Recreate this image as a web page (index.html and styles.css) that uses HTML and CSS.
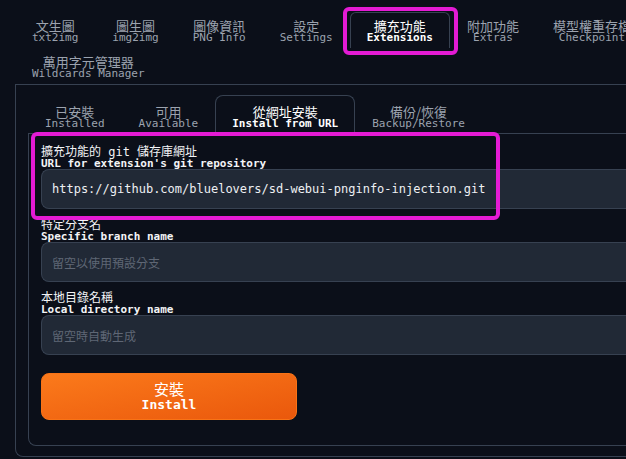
FILE: index.html
```html
<!DOCTYPE html>
<html lang="zh-Hant">
<head>
<meta charset="utf-8">
<title>Extensions</title>
<link rel="stylesheet" href="styles.css">
</head>
<body>
<div class="app">
  <nav class="tabs">
    <button class="tab"><span class="zh">文生圖</span><span class="en">txt2img</span></button>
    <button class="tab"><span class="zh">圖生圖</span><span class="en">img2img</span></button>
    <button class="tab"><span class="zh">圖像資訊</span><span class="en">PNG Info</span></button>
    <button class="tab"><span class="zh">設定</span><span class="en">Settings</span></button>
    <button class="tab selected"><span class="zh">擴充功能</span><span class="en">Extensions</span></button>
    <button class="tab"><span class="zh">附加功能</span><span class="en">Extras</span></button>
    <button class="tab"><span class="zh">模型權重存檔</span><span class="en">Checkpoint</span></button>
    <button class="tab"><span class="zh">萬用字元管理器</span><span class="en">Wildcards Manager</span></button>
  </nav>
  <section class="panel">
    <nav class="subtabs">
      <button class="subtab"><span class="zh">已安裝</span><span class="en">Installed</span></button>
      <button class="subtab"><span class="zh">可用</span><span class="en">Available</span></button>
      <button class="subtab selected"><span class="zh">從網址安裝</span><span class="en">Install from URL</span></button>
      <button class="subtab"><span class="zh">備份/恢復</span><span class="en">Backup/Restore</span></button>
    </nav>
    <div class="subpanel">
      <div class="field">
        <label class="label"><span class="zh">擴充功能的 git 儲存庫網址</span><span class="en">URL for extension's git repository</span></label>
        <div class="input">https://github.com/bluelovers/sd-webui-pnginfo-injection.git</div>
      </div>
      <div class="field">
        <label class="label"><span class="zh">特定分支名</span><span class="en">Specific branch name</span></label>
        <div class="input placeholder">留空以使用預設分支</div>
      </div>
      <div class="field">
        <label class="label"><span class="zh">本地目錄名稱</span><span class="en">Local directory name</span></label>
        <div class="input placeholder">留空時自動生成</div>
      </div>
      <button class="install"><span class="zh">安裝</span><span class="en">Install</span></button>
    </div>
  </section>
  <div class="mark mark-tab"></div>
  <div class="mark mark-field"></div>
</div>
</body>
</html>
```
FILE: styles.css
```css
html, body {
  margin: 0;
  padding: 0;
  background: #0b0f19;
  overflow: hidden;
}
body {
  font-family: "DejaVu Sans Mono", "Noto Sans CJK TC", monospace;
  color: #e5e7eb;
}
.app {
  position: relative;
  width: 760px;
  padding: 12px 0 0 15px;
}
.zh, .en {
  display: block;
  white-space: nowrap;
}
.tabs {
  display: flex;
  flex-wrap: wrap;
}
.tab, .subtab {
  font-family: inherit;
  background: transparent;
  border: 1px solid transparent;
  border-bottom: none;
  color: #9ca3af;
  margin: 0;
  cursor: pointer;
  text-align: center;
}
.tab {
  padding: 6px 16px 4px;
  height: 36px;
  box-sizing: border-box;
  border-radius: 6px 6px 0 0;
}
.tab .zh, .subtab .zh {
  font-size: 13px;
  line-height: 13px;
  font-family: "Noto Sans CJK TC", sans-serif;
}
.tab .en, .subtab .en {
  font-size: 11px;
  line-height: 12px;
}
.tab.selected, .subtab.selected {
  border-color: #374151;
  color: #ffffff;
}
.tab.selected .en, .subtab.selected .en {
  font-weight: bold;
}
.panel {
  border: 1px solid #374151;
  border-right: none;
  border-radius: 0 0 0 8px;
  padding: 10px 0 10px 12px;
}
.subtabs {
  display: flex;
}
.subtab {
  padding: 9px 16px 3px;
  height: 38px;
  box-sizing: border-box;
  border-radius: 8px 8px 0 0;
}
.subpanel {
  border: 1px solid #374151;
  border-right: none;
  border-radius: 0 0 0 8px;
  padding: 12px 0 25px 12px;
  display: flex;
  flex-direction: column;
  gap: 10px;
}
.field {
  display: flex;
  flex-direction: column;
}
.label .zh {
  font-size: 12px;
  line-height: 12px;
  color: #f3f4f6;
}
.label .en {
  font-size: 11px;
  line-height: 11px;
  font-weight: bold;
  color: #f3f4f6;
}
.input {
  height: 40px;
  box-sizing: border-box;
  background: #212936;
  border: 1px solid #374151;
  border-right: none;
  border-radius: 8px 0 0 8px;
  padding: 0 10px;
  display: flex;
  align-items: center;
  font-size: 12px;
  color: #eef0f3;
  white-space: nowrap;
}
.input.placeholder {
  font-family: "Noto Sans CJK TC", sans-serif;
  color: #5f6775;
}
.install {
  margin-top: 8px;
  width: 256px;
  height: 47px;
  border: 1px solid #f97316;
  border-radius: 8px;
  background: linear-gradient(to bottom right, #fb7a1b, #ea580c);
  color: #ffffff;
  font-family: inherit;
  cursor: pointer;
  padding: 0;
}
.install .zh {
  font-family: "Noto Sans CJK TC", sans-serif;
  font-size: 15px;
  line-height: 16px;
}
.install .en {
  font-size: 13px;
  line-height: 15px;
  font-weight: bold;
}
.mark {
  position: absolute;
  border: 4px solid #e41bd4;
  border-radius: 6px;
  box-sizing: border-box;
  pointer-events: none;
}
.mark-tab {
  left: 343px;
  top: 7px;
  width: 115px;
  height: 48px;
}
.mark-field {
  left: 31px;
  top: 132px;
  width: 469px;
  height: 88px;
}
```
